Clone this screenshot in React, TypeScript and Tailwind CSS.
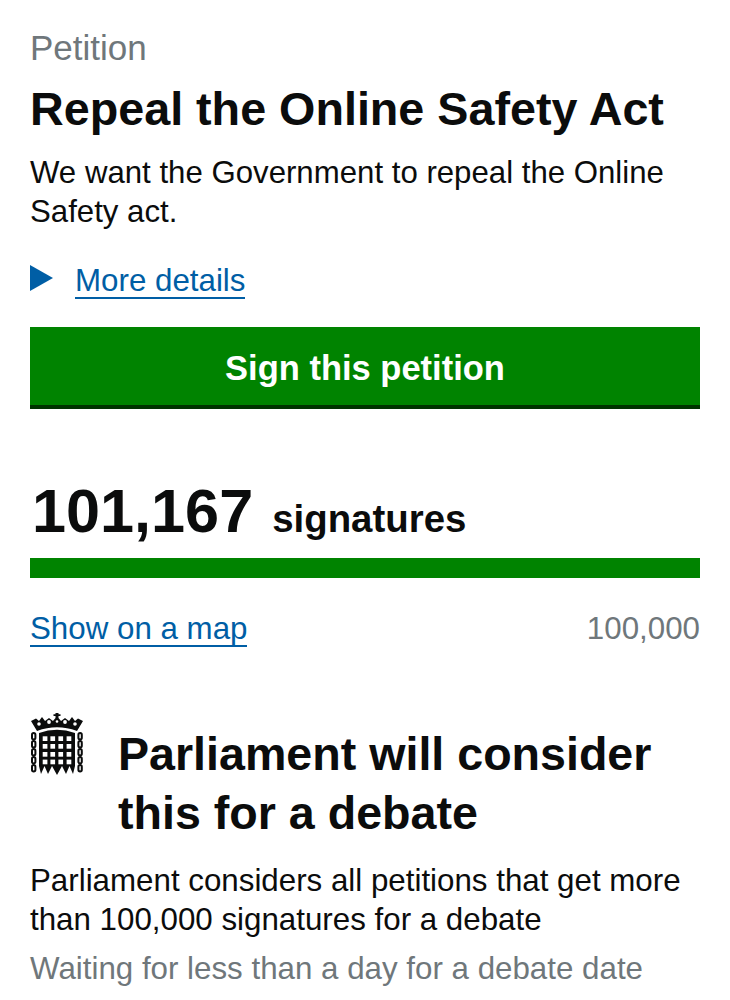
import React from "react";

function Portcullis() {
  const cols = [12.7, 20.4, 28.4, 36.6];
  const rows = [23.3, 31, 39, 46.6];
  const chain = [];
  for (let i = 0; i < 5; i++) {
    chain.push(<rect key={`l${i}`} x={2} y={20 + i * 8} width={3.4} height={6.4} rx={1.7} fill="none" stroke="#0b0c0c" strokeWidth={2} />);
    chain.push(<rect key={`r${i}`} x={48.4} y={20 + i * 8} width={3.4} height={6.4} rx={1.7} fill="none" stroke="#0b0c0c" strokeWidth={2} />);
  }
  return (
    <svg width="54" height="64" viewBox="0 0 54 64" className="shrink-0">
      <path d="M1 8 L6 5.5 L9 8 L12 4 L15 8 L19 5 L23 8 L25.5 5 L25.5 3 L23.5 3 L23.5 1.2 L25.5 1.2 L25.5 0 L28.5 0 L28.5 1.2 L30.5 1.2 L30.5 3 L28.5 3 L28.5 5 L31 8 L35 5 L39 8 L42 4 L45 8 L48 5.5 L53 8 L50 13 L47 18 Q27 10.5 7 18 L4 13 Z" fill="#0b0c0c" />
      <circle cx="9" cy="11" r="1.8" fill="#fff" />
      <circle cx="19" cy="9" r="1.9" fill="#fff" />
      <circle cx="35" cy="9" r="1.9" fill="#fff" />
      <circle cx="45" cy="11" r="1.8" fill="#fff" />
      <circle cx="27" cy="8.5" r="1.3" fill="#fff" />
      <path d="M9 20 Q27 13.5 45 20 V21 H9 Z" fill="#0b0c0c" />
      <path d="M9 21 H45 V53 L43 61 L39.5 53 L36 61 L32 53 L27 62 L22 53 L18 61 L14.5 53 L11 61 L9 53 Z" fill="#0b0c0c" />
      {rows.flatMap((y) => cols.map((x) => <rect key={`${x}-${y}`} x={x} y={y} width={4.7} height={4.7} fill="#fff" />))}
      {chain}
    </svg>
  );
}

export default function App() {
  return (
    <div className="w-[730px] h-[1000px] overflow-hidden bg-white px-[30px] pt-[28px] text-[#0b0c0c] font-['Liberation_Sans',Arial,sans-serif]">
      <p className="text-[35px] leading-[40px] text-[#6f777b]">Petition</p>
      <h1 className="mt-[15px] text-[46.7px] leading-[52px] font-bold whitespace-nowrap">Repeal the Online Safety Act</h1>
      <p className="mt-[18px] text-[31.2px] leading-[39px]">We want the Government to repeal the Online Safety act.</p>
      <div className="mt-[30px] flex items-center h-[40px]">
        <span className="w-0 h-0 mb-[6px] border-y-[13px] border-y-transparent border-l-[23px] border-l-[#005ea5]" />
        <a className="ml-[22px] text-[31.3px] leading-[33px] text-[#005ea5] border-b-2 border-[#005ea5]">More details</a>
      </div>
      <button className="mt-[26px] block w-full h-[82px] pt-[5px] bg-[#008300] border-b-[4px] border-[#003300] text-white text-[34.5px] font-bold">Sign this petition</button>
      <div className="mt-[65px] flex items-baseline">
        <span className="ml-[2px] text-[61.2px] leading-[74px] font-bold">101,167</span>
        <span className="ml-[19px] text-[38.4px] font-bold">signatures</span>
      </div>
      <div className="mt-[10px] h-[20px] bg-[#008300]" />
      <div className="mt-[31px] flex justify-between items-center text-[31.3px] leading-[40px]">
        <a className="text-[#005ea5] border-b-2 border-[#005ea5] leading-[33px]">Show on a map</a>
        <span className="text-[#6f777b]">100,000</span>
      </div>
      <div className="mt-[64px] flex">
        <Portcullis />
        <h2 className="ml-[34px] mt-[12px] text-[46.6px] leading-[59px] font-bold">Parliament will consider this for a debate</h2>
      </div>
      <p className="mt-[18px] text-[31.3px] leading-[39px]">Parliament considers all petitions that get more than 100,000 signatures for a debate</p>
      <p className="mt-[10px] text-[31.3px] leading-[39px] text-[#6f777b]">Waiting for less than a day for a debate date</p>
    </div>
  );
}
